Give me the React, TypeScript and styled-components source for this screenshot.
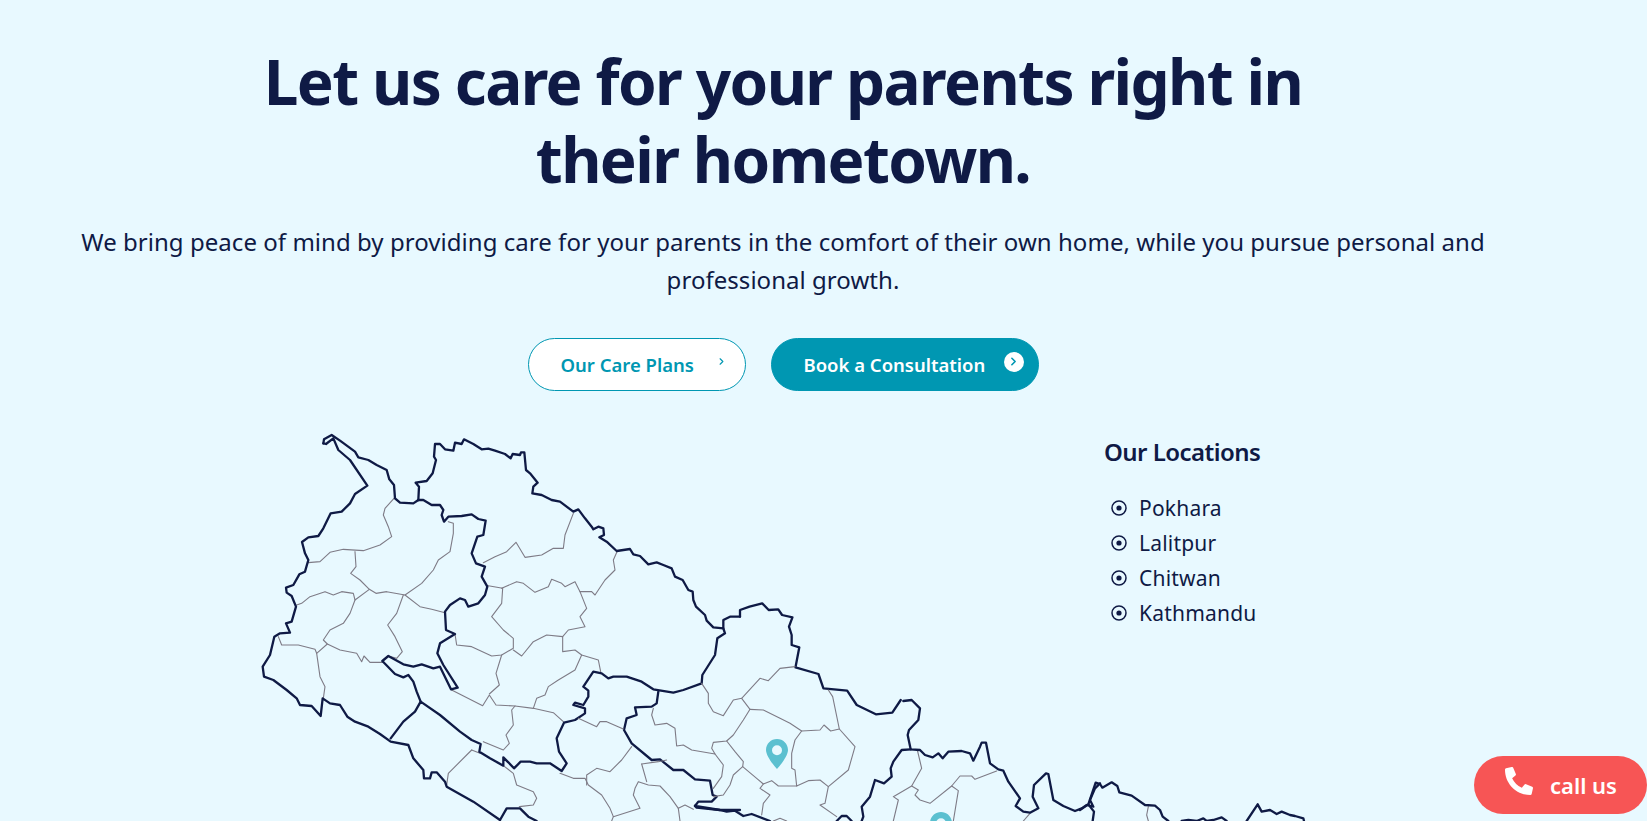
import React from "react";
import styled, { createGlobalStyle } from "styled-components";
import { ChevronRight } from "lucide-react";
import { FaPhoneAlt } from "react-icons/fa";

const ink = "#0f1a45";
const teal = "#0097b2";

const Global = createGlobalStyle`
  html, body { margin: 0; height: 100%; overflow: hidden; background: #e8f9ff; }
  #root { height: 821px; overflow: hidden; }
  * { box-sizing: border-box; }
`;

const Page = styled.main`
  position: relative;
  height: 821px;
  overflow: hidden;
  background: #e8f9ff;
  color: ${ink};
  font-family: "Noto Sans", "Open Sans", Arial, sans-serif;
`;

const Hero = styled.section`
  width: 1566px;
  padding-top: 42px;
  display: flex;
  flex-direction: column;
  align-items: center;
`;

const Title = styled.h1`
  margin: 0;
  width: 1100px;
  text-align: center;
  font-size: 62px;
  line-height: 78px;
  font-weight: 700;
  letter-spacing: -1.6px;
`;

const Lead = styled.p`
  margin: 25px 0 0;
  width: 1420px;
  text-align: center;
  font-size: 24px;
  line-height: 38px;
  font-weight: 400;
  letter-spacing: 0.04px;
`;

const Actions = styled.div`
  margin-top: 39px;
  display: flex;
  gap: 25px;
`;

const ActionButton = styled.a<{ $solid?: boolean }>`
  height: 53px;
  width: ${(p) => (p.$solid ? 268 : 218)}px;
  padding-left: 32px;
  display: flex;
  align-items: center;
  border-radius: 27px;
  border: 1px solid ${teal};
  background: ${(p) => (p.$solid ? teal : "#ffffff")};
  color: ${(p) => (p.$solid ? "#ffffff" : teal)};
  font-size: 18.5px;
  font-weight: 600;
  white-space: nowrap;
`;

const ButtonLabel = styled.span<{ $w: number }>`
  width: ${(p) => p.$w}px;
  flex: none;
`;

const ArrowDisc = styled.span<{ $solid?: boolean }>`
  width: 20px;
  height: 20px;
  margin-top: -6px;
  border-radius: 50%;
  display: flex;
  align-items: center;
  justify-content: center;
  background: ${(p) => (p.$solid ? "#ffffff" : "transparent")};
  color: ${teal};
`;

const MapRow = styled.div`
  position: relative;
  margin-top: 29px;
  width: 100%;
  height: 401px;
`;

const MapSvg = styled.svg`
  display: block;
  margin-left: 240px;
  width: 1090px;
  height: 401px;
`;

const Border = styled.polyline<{ $heavy?: boolean }>`
  fill: none;
  stroke: ${(p) => (p.$heavy ? "#0f1a45" : "#7e7b86")};
  stroke-width: ${(p) => (p.$heavy ? 2.3 : 1.1)}px;
  stroke-linejoin: round;
  stroke-linecap: round;
  vector-effect: non-scaling-stroke;
`;

const Locations = styled.aside`
  position: absolute;
  left: 1104px;
  top: 17px;
`;

const LocationsTitle = styled.h3`
  margin: 0 0 23px;
  font-size: 24px;
  line-height: 30px;
  font-weight: 600;
  letter-spacing: -0.55px;
  white-space: nowrap;
`;

const LocationList = styled.ul`
  margin: 0;
  padding: 0 0 0 7px;
  list-style: none;
`;

const LocationItem = styled.li`
  height: 35px;
  display: flex;
  align-items: center;
  gap: 12px;
  font-size: 21px;
  letter-spacing: 0.2px;
`;

const CallButton = styled.a`
  position: absolute;
  left: 1474px;
  top: 756px;
  width: 173px;
  height: 58px;
  border-radius: 29px;
  background: #f75555;
  color: #ffffff;
  display: flex;
  align-items: center;
  gap: 17px;
  padding-left: 31px;
  font-size: 22px;
  font-weight: 600;
`;

const PhoneWrap = styled.span`
  display: flex;
  margin-top: -8px;
`;

type Layer = { x: number; y: number; sx: number; sy: number; heavy: string[]; light: string[] };

const layers: Layer[] = [
  {
    x: 240, y: 420, sx: 3, sy: 3,
    heavy: [
      "250,70 252,58 275,45 300,62 345,95 355,112 385,120 410,135 440,150 448,178 462,195 465,235 480,248 520,250 535,240",
      "535,240 537,200 527,188 560,183 578,160 588,120 582,110 585,72 600,72 615,88 640,92 645,68 665,72 672,58 700,72 725,88 745,86 765,92 795,102 812,115 818,102 840,105 843,97 853,97 858,150 870,160 893,188 880,200 877,220 905,225 935,240 960,245 1000,275 1015,268 1035,295 1055,320 1060,328 1075,320 1090,325 1092,345 1078,352 1100,365 1130,393 1170,387 1180,403 1200,408 1225,433 1250,427 1270,435 1295,445 1305,470 1328,480 1345,510 1358,515 1360,540 1368,560 1395,585 1400,602 1420,622 1450,625 1450,600 1470,590 1500,590",
      "535,240 550,240 575,255 600,255 610,270 605,285 612,305 625,290 665,288 695,283 715,297 737,302 730,345 712,350 695,400 708,430 735,440 725,470 742,500 735,525 715,550 685,560 675,540 660,535 630,555 615,575 618,630 645,642 600,670 592,700 610,735 653,803 633,808 600,740 580,745 545,733 520,740 490,733 445,708 427,723 465,762 490,772 505,765 520,785 530,815 542,845",
      "250,70 258,72 280,55 295,90 330,120 382,197 345,222 330,250 305,275 272,280 250,325 235,348 205,352 186,366 195,400 205,420 195,455 178,463 160,495 138,503 140,518 155,528 168,560 155,605 138,610 150,638 120,640 103,650 90,705 68,740 72,770 100,780 140,810 170,835 180,855 215,858 242,888 248,835 270,850 300,855 322,890 345,905 385,920 420,942 452,965 505,975 520,1015 550,1050 552,1075 570,1075 575,1057 590,1057 615,1085 620,1100 700,1145 780,1200",
      "780,1200 800,1165 840,1165 865,1190 890,1203",
      "452,955 490,905 525,875 542,845 600,885 660,935 695,960 722,972 718,995 750,1015 790,1037 790,1012 805,1027 822,1045 842,1025 870,1025 890,1030 930,1030 965,1053 980,1030 957,995 950,955 972,908 1005,900 1035,880 1035,865 1000,855 1005,848 1030,855 1045,830 1045,812 1030,800 1060,755 1085,760 1105,775 1120,770 1160,770 1205,785 1240,808 1300,818 1330,810 1385,790 1387,765 1425,705 1432,655 1455,640 1450,625",
      "1255,815 1250,850 1235,860 1185,862 1190,885 1160,895 1152,930 1175,970 1235,1020 1260,1018 1300,1050 1330,1050 1365,1078 1410,1082 1418,1125 1430,1130 1415,1145 1375,1145 1365,1158 1440,1170 1500,1170",
    ],
    light: [
      "462,235 435,265 430,285 445,320 455,350 420,375 370,392 310,388 270,397 240,425 205,428",
      "345,395 348,440 332,460 360,480 388,508 408,520 440,515 495,525 545,490 580,450 595,420 630,395 640,340 640,310 625,305",
      "388,508 345,540 340,520 305,515 280,525 255,515 210,530 185,550 170,555",
      "345,540 330,580 310,610 270,630 250,660 262,672 300,690 350,700 365,725 372,708 390,727 430,727",
      "490,525 470,580 443,615 465,650 487,695 470,715 445,708",
      "495,525 540,560 575,568 615,578",
      "262,672 230,700 225,688 175,675 125,675 115,650",
      "230,700 240,770 255,800 250,835",
      "645,642 650,675 695,680 755,708 785,705 820,685 820,655 790,630 755,590 785,550 788,505 745,497",
      "785,505 830,485 850,490 885,517 925,500 935,478 965,490 975,500 1005,485 1020,515 1055,515 1065,525 1095,480 1125,450 1120,420 1132,393",
      "1020,515 1040,565 1020,590 1035,620 985,630 968,650 920,645 880,665 845,708 820,690",
      "968,650 968,695 1005,690 1025,705 1075,720 1082,755",
      "1025,705 1005,750 955,780 925,800 915,825 890,835 880,865 825,858 768,855 748,825 728,857 635,810",
      "785,705 768,760 778,795 748,822",
      "880,865 940,878 970,905",
      "825,858 815,870 820,915 798,945 808,970 790,990 730,965",
      "1000,280 975,345 970,385 940,385 905,405 855,412 828,367 800,395 765,410 730,428",
      "695,990 625,1060 620,1095",
      "695,990 720,1000",
      "790,1037 820,1060 830,1095 880,1115 890,1135 880,1155 838,1160",
    ],
  },
  {
    x: 740, y: 560, sx: 2.613, sy: 3,
    heavy: [
      "0,170 0,150 25,140 58,130 75,150 100,148 110,165 137,172 128,200 135,225 135,255 155,262 145,322 205,342 218,385 280,392 305,435 355,463 398,458 420,420",
    ],
    light: [],
  },
  {
    x: 560, y: 660, sx: 3, sy: 3,
    heavy: [
      "405,437 410,443 480,450 500,455 525,452 550,468 575,462 630,483",
      "830,483 845,468 860,468 875,483",
    ],
    light: [
      "425,70 445,100 445,130 460,155 490,167 520,120 545,115 600,55 625,62 660,25 705,20",
      "545,115 570,148 550,180 520,225 500,243 460,247 455,265 465,282 395,270 370,255 350,258 345,205 320,190 285,195 275,165 280,145",
      "570,148 610,150 660,175 690,190 725,213 780,210 792,195 812,213 838,207 818,110 805,90",
      "838,207 885,260 865,330 805,380 780,360 745,362 710,378 705,330 695,325 695,280 705,240 725,213",
      "710,378 655,378 635,362 610,372 590,355 548,320 550,305 525,275 500,243",
      "548,320 520,345 510,375 490,405 460,410",
      "465,282 490,315 485,350 460,385",
      "610,372 600,385 630,405 610,430 605,465",
      "805,380 795,430 780,435 830,470",
      "0,340 40,355 75,355 85,375 125,405 150,445 160,470 240,445 220,405 225,385 235,365 265,375 300,378 330,410 355,445 375,435 400,448",
      "245,312 260,365",
      "245,312 295,305 320,300",
      "80,375 80,345 110,325 150,335 185,300 215,260",
      "55,175 110,200 120,185 140,185 190,207",
      "160,470 155,483",
      "355,445 360,483",
      "640,483 660,475 680,483",
    ],
  },
  {
    x: 860, y: 700, sx: 3, sy: 3,
    heavy: [
      "130,3 155,0 180,25 175,60 147,90 143,105 152,148 180,150 195,165 218,172 235,160 248,175 265,155 305,153 330,160 340,182 360,140 365,128 378,128 390,190 415,208 430,212 445,245 480,295 467,318 490,335 510,338 535,325 518,290 522,255 558,220 565,222 580,300 610,318 645,333 665,325 680,315 700,320 690,300 705,265 720,250",
      "152,148 125,150 100,185 92,205 95,230 72,250 45,240 30,290 5,320 10,350 5,363",
    ],
    light: [
      "172,150 185,205 155,258 100,290 115,300 100,363",
      "155,258 175,270 165,285 180,300 210,310 275,258 295,272 280,363",
      "275,258 300,228 335,228 345,238 410,213",
      "510,340 490,363",
    ],
  },
  {
    x: 1080, y: 760, sx: 3, sy: 3,
    heavy: [
      "0,150 25,133 47,68 60,72 67,83 95,67 112,78 118,97 155,107 195,135 225,137 240,150 248,170 265,183",
      "25,133 42,155 38,183",
      "305,183 325,180 350,183 370,175 380,183 400,180 425,172 440,183",
      "500,183 533,133 545,155 570,150 590,162 605,155 630,165 645,168 670,175 672,183",
    ],
    light: ["205,140 200,165 205,183"],
  },
];

const Pin = ({ x, y }: { x: number; y: number }) => (
  <g transform={`translate(${x} ${y})`}>
    <path
      fill="#5bc0d0"
      fillRule="evenodd"
      d="M11 0C4.9 0 0 4.9 0 11c0 7 11 19 11 19s11-12 11-19C22 4.9 17.1 0 11 0Zm0 6.2a5 5 0 1 1 0 10 5 5 0 0 1 0-10Z"
    />
  </g>
);

const NepalMap = () => (
  <MapSvg viewBox="240 420 1090 401" aria-label="Map of Nepal">
    {layers.map((l, i) => (
      <g key={i} transform={`translate(${l.x} ${l.y}) scale(${1 / l.sx} ${1 / l.sy})`}>
        {l.light.map((p, j) => (
          <Border key={`l${j}`} points={p} />
        ))}
        {l.heavy.map((p, j) => (
          <Border key={`h${j}`} $heavy points={p} />
        ))}
      </g>
    ))}
    <Pin x={766} y={739} />
    <Pin x={930} y={812} />
  </MapSvg>
);

const Target = () => (
  <svg width="16" height="16" viewBox="0 0 16 16" aria-hidden="true">
    <circle cx="8" cy="8" r="7" fill="none" stroke={ink} strokeWidth="1.5" />
    <circle cx="8" cy="8" r="2.6" fill={ink} />
  </svg>
);

const places = ["Pokhara", "Lalitpur", "Chitwan", "Kathmandu"];

export default function App() {
  return (
    <Page>
      <Global />
      <Hero>
        <Title>Let us care for your parents right in their hometown.</Title>
        <Lead>
          We bring peace of mind by providing care for your parents in the comfort of their own home, while you pursue personal and professional growth.
        </Lead>
        <Actions>
          <ActionButton>
            <ButtonLabel $w={151}>Our Care Plans</ButtonLabel>
            <ArrowDisc>
              <ChevronRight size={11} strokeWidth={2.5} />
            </ArrowDisc>
          </ActionButton>
          <ActionButton $solid>
            <ButtonLabel $w={200}>Book a Consultation</ButtonLabel>
            <ArrowDisc $solid>
              <ChevronRight size={13} strokeWidth={3} />
            </ArrowDisc>
          </ActionButton>
        </Actions>
        <MapRow>
          <NepalMap />
          <Locations>
            <LocationsTitle>Our Locations</LocationsTitle>
            <LocationList>
              {places.map((p) => (
                <LocationItem key={p}>
                  <Target />
                  {p}
                </LocationItem>
              ))}
            </LocationList>
          </Locations>
        </MapRow>
      </Hero>
      <CallButton>
        <PhoneWrap>
          <FaPhoneAlt size={28} />
        </PhoneWrap>
        call us
      </CallButton>
    </Page>
  );
}
